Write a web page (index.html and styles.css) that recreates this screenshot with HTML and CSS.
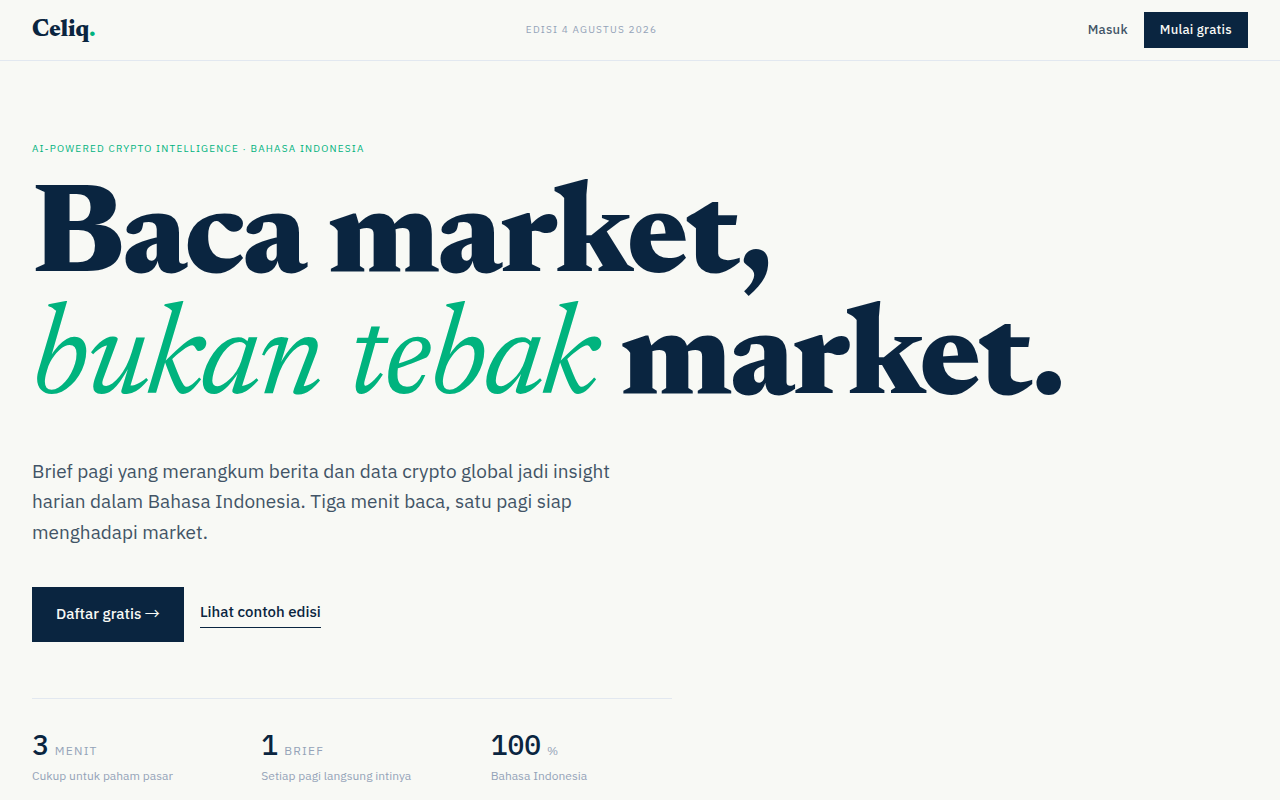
FILE: index.html
```html
<!DOCTYPE html>
<html lang="id">
<head>
    <meta charset="UTF-8">
    <meta name="viewport" content="width=device-width, initial-scale=1.0">
    <title>Celiq</title>
    <link rel="stylesheet" href="styles.css">
</head>
<body>
    <header class="header">
        <a href="#" class="logo">Celiq<span class="accent">.</span></a>
        <p class="edition">Edisi 4 Agustus 2026</p>
        <nav class="nav">
            <a href="#" class="nav-link">Masuk</a>
            <a href="#" class="nav-button">Mulai gratis</a>
        </nav>
    </header>
    <main class="hero">
        <p class="eyebrow">AI-Powered Crypto Intelligence · Bahasa Indonesia</p>
        <h1>Baca market,<br><em>bukan tebak</em> market.</h1>
        <p class="lead">Brief pagi yang merangkum berita dan data crypto global jadi insight harian dalam Bahasa Indonesia. Tiga menit baca, satu pagi siap menghadapi market.</p>
        <div class="actions">
            <a href="#" class="primary">Daftar gratis <span class="arrow">→</span></a>
            <a href="#" class="secondary">Lihat contoh edisi</a>
        </div>
        <dl class="stats">
            <div class="stat">
                <dt><span class="number">3</span> <span class="unit">Menit</span></dt>
                <dd>Cukup untuk paham pasar</dd>
            </div>
            <div class="stat">
                <dt><span class="number">1</span> <span class="unit">Brief</span></dt>
                <dd>Setiap pagi langsung intinya</dd>
            </div>
            <div class="stat">
                <dt><span class="number">100</span> <span class="unit">%</span></dt>
                <dd>Bahasa Indonesia</dd>
            </div>
        </dl>
    </main>
</body>
</html>
```
FILE: styles.css
```css
* {
    box-sizing: border-box;
    margin: 0;
    padding: 0;
}
body {
    font-family: "IBM Plex Sans", "Open Sans", sans-serif;
    background-color: #f8f9f5;
    color: #0a2540;
}
a {
    color: inherit;
    text-decoration: none;
}
.header {
    display: flex;
    justify-content: space-between;
    align-items: center;
    padding: 12px 32px;
    border-bottom: 1px solid #e2e8f0;
}
.logo {
    font-family: Newsreader, "Liberation Serif", serif;
    font-size: 24px;
    line-height: 32px;
    font-weight: 800;
}
.accent {
    color: #00b37e;
}
.edition {
    font-size: 10px;
    line-height: 16px;
    letter-spacing: 0.12em;
    text-transform: uppercase;
    color: #94a3b8;
}
.nav {
    display: flex;
    align-items: center;
    gap: 16px;
    font-size: 13px;
    line-height: 20px;
    font-weight: 500;
    letter-spacing: 0.02em;
}
.nav-link {
    color: #425466;
}
.nav-button {
    padding: 8px 16px;
    background: #0a2540;
    color: #f8f9f5;
}
.hero {
    padding: 80px 32px 12px;
}
.eyebrow {
    font-size: 10px;
    line-height: 16px;
    letter-spacing: 0.12em;
    text-transform: uppercase;
    color: #00b37e;
}
h1 {
    margin-top: 23px;
    font-family: Newsreader, "Liberation Serif", serif;
    font-size: 128px;
    line-height: 122px;
    font-weight: 800;
    letter-spacing: -2px;
}
h1 em {
    font-weight: 400;
    color: #00b37e;
}
.lead {
    max-width: 600px;
    margin-top: 32px;
    font-size: 19px;
    line-height: 1.6;
    color: #425466;
}
.actions {
    display: flex;
    align-items: center;
    gap: 16px;
    margin-top: 40px;
    font-size: 15px;
    line-height: 1.5;
    font-weight: 500;
}
.primary {
    padding: 16px 24px;
    background: #0a2540;
    color: #f8f9f5;
}
.arrow {
    font-family: "Noto Sans CJK JP", sans-serif;
    font-weight: 400;
    line-height: 1;
}
.secondary {
    padding-bottom: 4px;
    border-bottom: 1px solid #0a2540;
}
.stats {
    display: grid;
    grid-template-columns: repeat(3, 1fr);
    gap: 48px;
    max-width: 640px;
    margin-top: 56px;
    padding-top: 32px;
    border-top: 1px solid #e2e8f0;
}
.stat dt {
    display: flex;
    align-items: baseline;
    gap: 6px;
}
.number {
    font-family: "IBM Plex Mono", "Liberation Mono", monospace;
    font-size: 28px;
    line-height: 28px;
    font-weight: 500;
}
.unit {
    font-size: 12px;
    letter-spacing: 0.1em;
    text-transform: uppercase;
    color: #94a3b8;
}
.stat dd {
    margin-top: 8px;
    font-size: 12px;
    line-height: 18px;
    color: #94a3b8;
}
```
